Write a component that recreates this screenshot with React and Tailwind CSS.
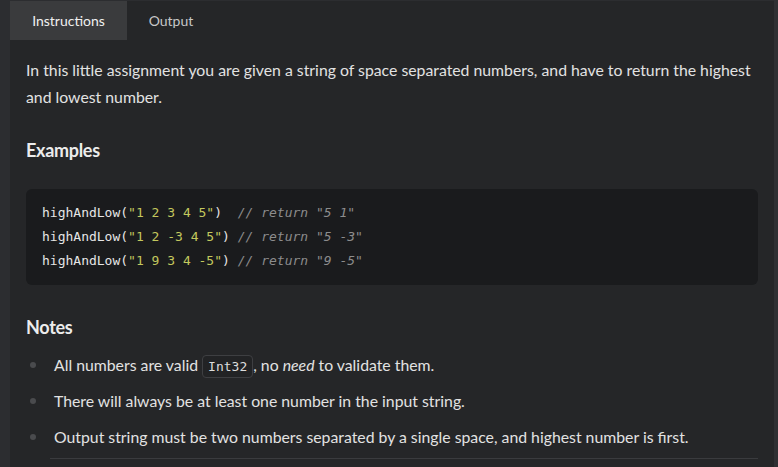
import React from "react";

const lines = [
  { arg: '"1 2 3 4 5"', pad: "  ", ret: '"5 1"' },
  { arg: '"1 2 -3 4 5"', pad: " ", ret: '"5 -3"' },
  { arg: '"1 9 3 4 -5"', pad: " ", ret: '"9 -5"' },
];

function Bullet({ children }) {
  return (
    <li className="flex items-center h-[36px]">
      <span className="w-[6px] h-[6px] rounded-full bg-[#4a4b4e] ml-[4px] mr-[18px] shrink-0" />
      <span>{children}</span>
    </li>
  );
}

export default function App() {
  return (
    <div
      className="w-[778px] h-[467px] overflow-hidden bg-[#2c2d30] flex text-[#e2e2e2]"
      style={{ fontFamily: "Lato, 'Open Sans', sans-serif" }}
    >
      <div className="w-[10px] shrink-0" />
      <div className="flex-1 bg-[#252628] border-r-[4px] border-[#2f3033] flex flex-col">
        {/* tabs */}
        <div className="h-[40px] flex text-[14px] shrink-0 border-t border-[#2c2d30]">
          <div className="w-[117px] bg-[#3a3b3d] flex items-center justify-center text-[#f0f0f0]">
            Instructions
          </div>
          <div className="w-[88px] flex items-center justify-center text-[#c8c8c8]">Output</div>
        </div>

        <div className="px-[16px] pt-[16px]">
          <p className="text-[15.8px] leading-[27px] pr-[4px]">
            In this little assignment you are given a string of space separated numbers, and have to return the highest
            and lowest number.
          </p>

          <h2 className="text-[18px] font-bold mt-[27px] tracking-[-0.3px] text-[#ececec]">Examples</h2>

          <div
            className="mt-[25px] bg-[#1a1b1d] rounded-[6px] h-[96px] px-[16px] py-[12px] text-[13px] leading-[24px]"
            style={{ fontFamily: "'DejaVu Sans Mono', monospace" }}
          >
            {lines.map((l, i) => (
              <div key={i} className="whitespace-pre">
                <span className="text-[#e6e6e6]">highAndLow(</span>
                <span className="text-[#c3c85e]">{l.arg}</span>
                <span className="text-[#e6e6e6]">){l.pad}</span>
                <span className="italic text-[#8c8c8c]">// return {l.ret}</span>
              </div>
            ))}
          </div>

          <h2 className="text-[18px] font-bold mt-[29px] tracking-[-0.3px] text-[#ececec]">Notes</h2>

          <ul className="mt-[6px] text-[15.8px]">
            <Bullet>
              All numbers are valid{" "}
              <code
                className="inline-block text-[13px] px-[5px] leading-[21px] border border-[#3e3f42] rounded-[4px] bg-[#222325] text-[#dcdcdc]"
                style={{ fontFamily: "'DejaVu Sans Mono', monospace" }}
              >
                Int32
              </code>
              , no <em>need</em> to validate them.
            </Bullet>
            <Bullet>There will always be at least one number in the input string.</Bullet>
            <Bullet>Output string must be two numbers separated by a single space, and highest number is first.</Bullet>
          </ul>
          <div className="ml-[24px] mt-[3px] border-t border-[#3a3b3e]" />
        </div>
      </div>
    </div>
  );
}
